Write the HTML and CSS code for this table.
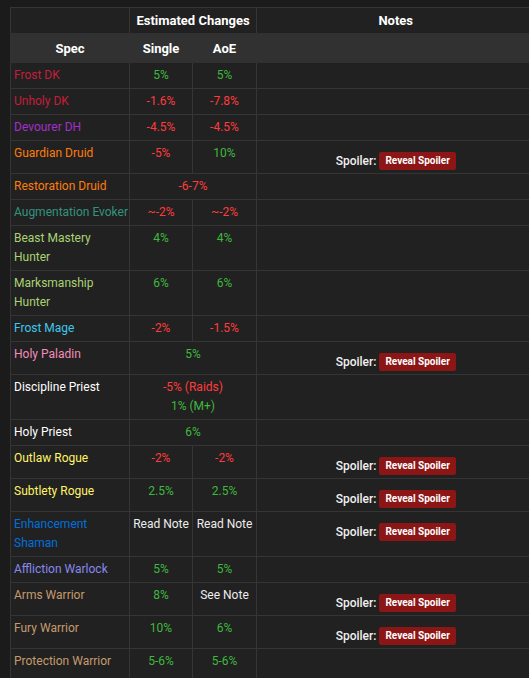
FILE: index.html
```html
<!DOCTYPE html>
<html>
<head>
<meta charset="utf-8">
<link rel="stylesheet" href="styles.css">
</head>
<body>
<div class="wrap">
<table class="tbl">
<colgroup><col class="c-spec"><col class="c-num"><col class="c-num2"><col class="c-notes"></colgroup>
<thead>
<tr class="h1"><th></th><th colspan="2">Estimated Changes</th><th>Notes</th></tr>
<tr class="h2"><th>Spec</th><th>Single</th><th>AoE</th><th></th></tr>
</thead>
<tbody>
<tr><td class="spec dk">Frost DK</td><td class="g">5%</td><td class="g">5%</td><td></td></tr>
<tr><td class="spec dk">Unholy DK</td><td class="r">-1.6%</td><td class="r">-7.8%</td><td></td></tr>
<tr><td class="spec dh">Devourer DH</td><td class="r">-4.5%</td><td class="r">-4.5%</td><td></td></tr>
<tr><td class="spec druid">Guardian Druid</td><td class="r">-5%</td><td class="g">10%</td><td class="notes"><div class="spoil"><span class="lbl">Spoiler:</span><span class="btn">Reveal Spoiler</span></div></td></tr>
<tr><td class="spec druid">Restoration Druid</td><td colspan="2" class="r">-6-7%</td><td></td></tr>
<tr><td class="spec evoker">Augmentation Evoker</td><td class="r">~-2%</td><td class="r">~-2%</td><td></td></tr>
<tr><td class="spec hunter">Beast Mastery<br>Hunter</td><td class="g">4%</td><td class="g">4%</td><td></td></tr>
<tr><td class="spec hunter">Marksmanship<br>Hunter</td><td class="g">6%</td><td class="g">6%</td><td></td></tr>
<tr><td class="spec mage">Frost Mage</td><td class="r">-2%</td><td class="r">-1.5%</td><td></td></tr>
<tr><td class="spec paladin">Holy Paladin</td><td colspan="2" class="g">5%</td><td class="notes"><div class="spoil"><span class="lbl">Spoiler:</span><span class="btn">Reveal Spoiler</span></div></td></tr>
<tr><td class="spec priest">Discipline Priest</td><td colspan="2"><span class="r">-5% (Raids)</span><br><span class="g">1% (M+)</span></td><td></td></tr>
<tr><td class="spec priest">Holy Priest</td><td colspan="2" class="g">6%</td><td></td></tr>
<tr><td class="spec rogue">Outlaw Rogue</td><td class="r">-2%</td><td class="r">-2%</td><td class="notes"><div class="spoil"><span class="lbl">Spoiler:</span><span class="btn">Reveal Spoiler</span></div></td></tr>
<tr><td class="spec rogue">Subtlety Rogue</td><td class="g">2.5%</td><td class="g">2.5%</td><td class="notes"><div class="spoil"><span class="lbl">Spoiler:</span><span class="btn">Reveal Spoiler</span></div></td></tr>
<tr><td class="spec shaman">Enhancement<br>Shaman</td><td class="w">Read Note</td><td class="w">Read Note</td><td class="notes"><div class="spoil"><span class="lbl">Spoiler:</span><span class="btn">Reveal Spoiler</span></div></td></tr>
<tr><td class="spec warlock">Affliction Warlock</td><td class="g">5%</td><td class="g">5%</td><td></td></tr>
<tr><td class="spec warrior">Arms Warrior</td><td class="g">8%</td><td class="w">See Note</td><td class="notes"><div class="spoil"><span class="lbl">Spoiler:</span><span class="btn">Reveal Spoiler</span></div></td></tr>
<tr><td class="spec warrior">Fury Warrior</td><td class="g">10%</td><td class="g">6%</td><td class="notes"><div class="spoil"><span class="lbl">Spoiler:</span><span class="btn">Reveal Spoiler</span></div></td></tr>
<tr class="last"><td class="spec warrior">Protection Warrior</td><td class="g">5-6%</td><td class="g">5-6%</td><td></td></tr>
</tbody>
</table>
</div>
</body>
</html>
```
FILE: styles.css
```css
html {
  margin: 0;
  padding: 0;
  background: #1b1b1b;
}
body {
  margin: 0;
  padding: 7px 0 0 0;
  background: #1b1b1b;
}
.wrap {
  margin-left: 10px;
  height: 671px;
  overflow: hidden;
  background: #212121;
}
.tbl {
  border-collapse: collapse;
  table-layout: fixed;
  width: 524px;
  background: #212121;
  font-family: Roboto, "Open Sans", sans-serif;
  font-size: 12px;
  line-height: 19px;
  color: #ececec;
}
.c-spec { width: 119px; }
.c-num { width: 63px; }
.c-num2 { width: 64px; }
.c-notes { width: 278px; }
.tbl th, .tbl td {
  border: 1px solid #353535;
  padding: 3px 3px;
  text-align: center;
  vertical-align: top;
  white-space: nowrap;
}
.tbl th:last-child, .tbl td:last-child {
  border-right: 0;
}
.tbl .last td {
  padding-bottom: 8px;
}
.tbl th {
  font-weight: 700;
  font-size: 13px;
  color: #ffffff;
}
.h1 th {
  border-bottom-color: #313131;
}
.h2 th {
  background: #313131;
  border-color: #313131;
  padding: 5px 3px 4px;
}
.tbl td.spec {
  text-align: left;
}
.g { color: #3fb83f; }
.r { color: #ff3c3c; }
.w { color: #ececec; }
.dk { color: #c41e3a; }
.dh { color: #a330c9; }
.druid { color: #ff7c0a; }
.evoker { color: #33937f; }
.hunter { color: #aad372; }
.mage { color: #3fc7eb; }
.paladin { color: #f48cba; }
.priest { color: #ffffff; }
.rogue { color: #fff468; }
.shaman { color: #0070dd; }
.warlock { color: #8788ee; }
.warrior { color: #c69b6d; }
.spoil {
  padding-top: 8px;
  display: flex;
  justify-content: center;
  align-items: center;
  gap: 3px;
  line-height: 18px;
}
.lbl {
  font-weight: 500;
  font-size: 12px;
  color: #f0f0f0;
}
.btn {
  display: inline-block;
  background: #8c1515;
  color: #ffffff;
  font-size: 10px;
  font-weight: 700;
  height: 18px;
  line-height: 18px;
  padding: 0 6px;
  border-radius: 2px;
}
```
